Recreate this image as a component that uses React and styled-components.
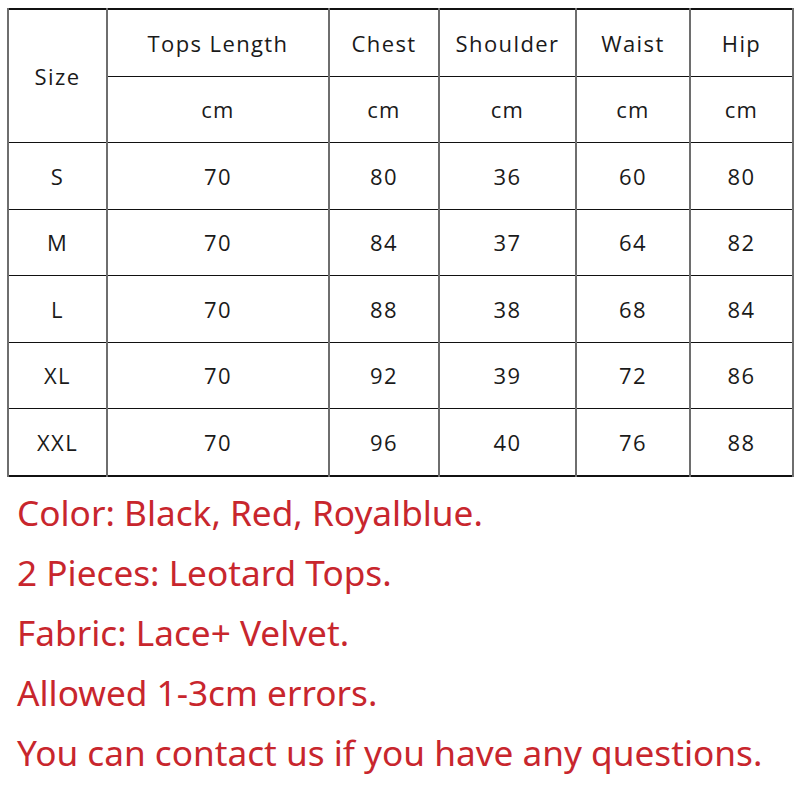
import React from 'react'
import styled, { createGlobalStyle } from 'styled-components'

const Global = createGlobalStyle`
  html, body {
    margin: 0;
    padding: 0;
    background: #fff;
  }
`

const Page = styled.div`
  width: 800px;
  height: 800px;
  padding: 8px 0 0 7px;
  box-sizing: border-box;
  background: #fff;
  overflow: hidden;
`

const Table = styled.table`
  border-collapse: collapse;
  table-layout: fixed;
  width: 785px;
  border: 2px solid #111;
  font-family: 'Open Sans', 'DejaVu Sans', sans-serif;
  font-size: 22px;
  color: #1a1a1a;
  letter-spacing: 1.4px;
`

const Cell = styled.td`
  height: 65.5px;
  padding: 0;
  text-align: center;
  vertical-align: middle;
  border-top: 1.5px solid #111;
  border-bottom: 1.5px solid #111;
  border-left: 2px solid #6e6e6e;
  border-right: 2px solid #6e6e6e;
`

const Notes = styled.div`
  padding: 5px 0 0 10px;
  display: flex;
  flex-direction: column;
`

const Note = styled.div`
  font-family: 'Noto Sans', 'Open Sans', sans-serif;
  font-size: 35.2px;
  line-height: 60px;
  color: #c8262d;
  white-space: nowrap;
`

const widths = [99, 222, 110, 137, 114, 103]
const heads = ['Tops Length', 'Chest', 'Shoulder', 'Waist', 'Hip']
const rows = [
  ['S', 70, 80, 36, 60, 80],
  ['M', 70, 84, 37, 64, 82],
  ['L', 70, 88, 38, 68, 84],
  ['XL', 70, 92, 39, 72, 86],
  ['XXL', 70, 96, 40, 76, 88],
]
const notes = [
  'Color: Black, Red, Royalblue.',
  '2 Pieces: Leotard Tops.',
  'Fabric: Lace+ Velvet.',
  'Allowed 1-3cm errors.',
  'You can contact us if you have any questions.',
]

export default function App() {
  return (
    <Page>
      <Global />
      <Table>
        <colgroup>
          {widths.map((w, i) => (
            <col key={i} style={{ width: w }} />
          ))}
        </colgroup>
        <tbody>
          <tr>
            <Cell rowSpan={2}>Size</Cell>
            {heads.map(h => (
              <Cell key={h}>{h}</Cell>
            ))}
          </tr>
          <tr>
            {heads.map(h => (
              <Cell key={h}>cm</Cell>
            ))}
          </tr>
          {rows.map(r => (
            <tr key={r[0]}>
              {r.map((v, i) => (
                <Cell key={i}>{v}</Cell>
              ))}
            </tr>
          ))}
        </tbody>
      </Table>
      <Notes>
        {notes.map(n => (
          <Note key={n}>{n}</Note>
        ))}
      </Notes>
    </Page>
  )
}
